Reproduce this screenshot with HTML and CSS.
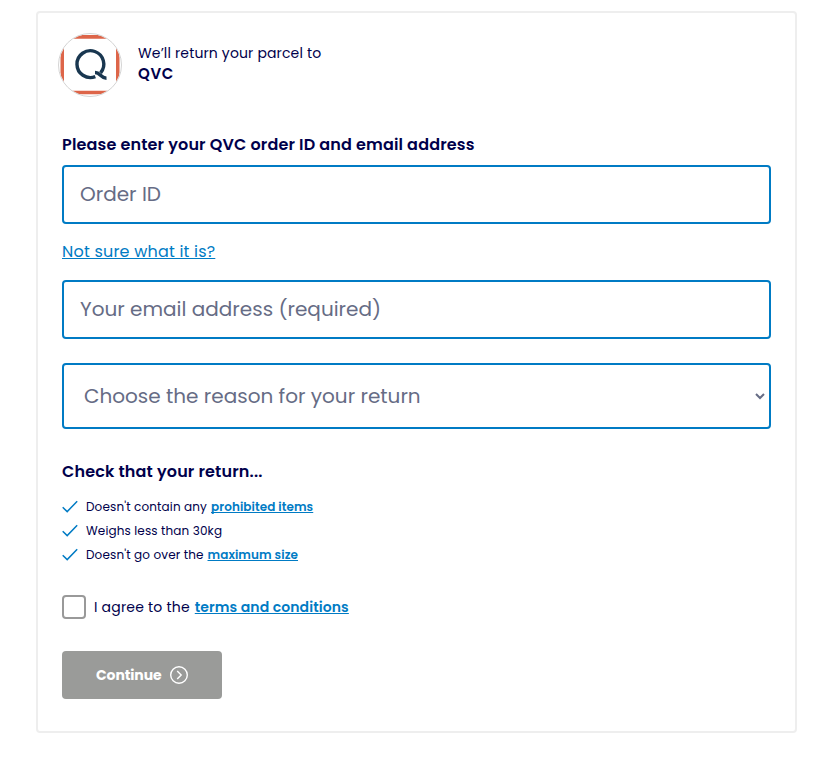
FILE: index.html
```html
<!DOCTYPE html>
<html lang="en">
<head>
<meta charset="utf-8">
<title>Return your parcel</title>
<link rel="stylesheet" href="styles.css">
</head>
<body>
<main class="card">
  <header class="retailer">
    <svg class="logo" viewBox="0 0 64 64" aria-hidden="true">
      <defs><clipPath id="disc"><circle cx="32" cy="32" r="31"/></clipPath></defs>
      <g clip-path="url(#disc)">
        <path fill="#fff" d="M0 0h64v64H0z"/>
        <path fill="#dd6549" d="M14 2h36v3.700H14zM14 57.700h36v3.500H14zM2.500 14H6v36H2.500zM58 14h3.500v36H58z"/>
      </g>
      <circle cx="32" cy="32" r="31.5" fill="none" stroke="#d4d4d4"/>
      <path d="M37.300 43.600A13.400 13.400 0 1 1 42.600 39.800M37 39.500C42.500 39.500 42.500 45.200 48.500 45.200" fill="none" stroke="#193750" stroke-width="3.400"/>
    </svg>
    <div class="retailer-text">
      <p class="intro">We’ll return your parcel to</p>
      <p class="name">QVC</p>
    </div>
  </header>
  <form>
    <h2 class="title">Please enter your QVC order ID and email address</h2>
    <input class="field order" type="text" placeholder="Order ID">
    <p class="help"><a href="#">Not sure what it is?</a></p>
    <input class="field email" type="email" placeholder="Your email address (required)">
    <div class="select">
      <select><option>Choose the reason for your return</option></select>
      <svg class="chevron" viewBox="0 0 10 7"><path d="M1 1l4 4 4-4" fill="none" stroke="#666c85" stroke-width="2"/></svg>
    </div>
    <h2 class="check-title">Check that your return...</h2>
    <ul class="checks">
      <li><svg class="tick" viewBox="0 0 16 14"><path d="M.7 7.3l4.500 4.300L15.200 1.200"/></svg><span>Doesn't contain any</span><a href="#">prohibited items</a></li>
      <li><svg class="tick" viewBox="0 0 16 14"><path d="M.7 7.3l4.500 4.300L15.200 1.200"/></svg><span>Weighs less than 30kg</span></li>
      <li><svg class="tick" viewBox="0 0 16 14"><path d="M.7 7.3l4.500 4.300L15.200 1.200"/></svg><span>Doesn't go over the</span><a href="#">maximum size</a></li>
    </ul>
    <label class="agree"><input type="checkbox"><span>I agree to the</span><a href="#">terms and conditions</a></label>
    <button class="continue" type="button"><span>Continue</span><svg viewBox="0 0 18 18"><circle cx="9" cy="9" r="8.3"/><path d="M7.200 5l4 4-4 4"/></svg></button>
  </form>
</main>
</body>
</html>
```
FILE: styles.css
```css
* { box-sizing: border-box; }
body, h2, p, ul { margin: 0; padding: 0; }
body {
  background: #fff;
  color: #00004b;
  font-family: Poppins, Inter, sans-serif;
  font-weight: 400;
}
a {
  color: #007bc4;
  text-decoration: underline;
  text-underline-offset: 1px;
  text-decoration-thickness: 1px;
  text-decoration-skip-ink: none;
}
.card {
  width: 761px;
  height: 722px;
  margin: 11px 0 0 36px;
  padding: 20px 24px;
  border: 2px solid #eee;
  border-radius: 4px;
}
.retailer { display: flex; height: 64px; margin-left: -4px; }
.logo { width: 64px; height: 64px; }
.retailer-text { margin: 10px 0 0 16px; }
.intro { font-size: 14px; line-height: 20px; letter-spacing: 0.15px; }
.name { font-size: 15px; line-height: 21px; font-weight: 600; letter-spacing: 0.6px; }
.title, .check-title { font-size: 16px; line-height: 24px; font-weight: 600; letter-spacing: 0.16px; }
.title { margin-top: 36px; }
.field, select {
  display: block;
  width: 100%;
  border: 2px solid #007bc4;
  border-radius: 4px;
  background: #fff;
  color: #666c85;
  font: inherit;
  font-size: 20px;
}
.field { height: 59px; padding: 0 16px 2px; }
.field::placeholder { color: #666c85; opacity: 1; }
.order { margin-top: 8px; }
.help { margin: 16px 0; font-size: 16px; line-height: 24px; letter-spacing: 0.2px; }
.select { position: relative; margin-top: 24px; }
select { height: 66px; padding: 0 20px; appearance: none; }
.chevron { position: absolute; right: 6px; top: 30px; width: 10px; height: 7px; }
.check-title { margin-top: 31px; }
.checks { margin-top: 11px; list-style: none; font-size: 12px; line-height: 24px; letter-spacing: 0.13px; }
.checks li { display: flex; align-items: center; }
.checks a { margin-left: 4px; font-weight: 600; letter-spacing: 0.08px; }
.tick { width: 16px; height: 14px; margin-right: 8px; fill: none; stroke: #007bc4; stroke-width: 1.5; }
.agree { display: flex; align-items: center; height: 24px; margin-top: 28px; font-size: 14px; letter-spacing: 0.2px; }
.agree input {
  width: 24px;
  height: 24px;
  margin: 0 8px 0 0;
  border: 2px solid #999;
  border-radius: 4px;
  appearance: none;
}
.agree a { margin-left: 5px; font-weight: 600; letter-spacing: 0.1px; }
.continue {
  display: flex;
  align-items: center;
  width: 160px;
  height: 48px;
  margin-top: 32px;
  padding: 0 34px;
  border: 0;
  border-radius: 4px;
  background: #9a9b99;
  color: #fff;
  font: inherit;
  font-size: 14px;
  font-weight: 700;
  letter-spacing: -0.1px;
}
.continue svg { width: 18px; height: 18px; margin-left: auto; fill: none; stroke: #fff; stroke-width: 1.4; }
```
